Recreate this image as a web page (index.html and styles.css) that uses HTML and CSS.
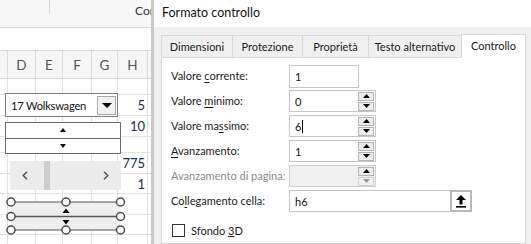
FILE: index.html
```html
<!DOCTYPE html>
<html lang="it">
<head>
<meta charset="utf-8">
<link rel="stylesheet" href="styles.css">
</head>
<body>
<div class="app">
  <div class="sheet">
    <div class="ribbon"><span class="rib-sep"></span><span class="rib-text">Con</span></div>
    <div class="fbar"></div>
    <div class="colheads">
      <div class="ch"></div><div class="ch">D</div><div class="ch">E</div><div class="ch">F</div><div class="ch">G</div><div class="ch">H</div><div class="ch last"></div>
    </div>
    <div class="cells">
      <div class="row r1"><div class="c"></div><div class="c"></div><div class="c"></div><div class="c"></div><div class="c"></div><div class="c v"></div><div class="c last"></div></div>
      <div class="row r2"><div class="c"></div><div class="c"></div><div class="c"></div><div class="c"></div><div class="c"></div><div class="c v">5</div><div class="c last"></div></div>
      <div class="row r3"><div class="c"></div><div class="c"></div><div class="c"></div><div class="c"></div><div class="c"></div><div class="c v">10</div><div class="c last"></div></div>
      <div class="row r4"><div class="c"></div><div class="c"></div><div class="c"></div><div class="c"></div><div class="c"></div><div class="c v"></div><div class="c last"></div></div>
      <div class="row r5"><div class="c"></div><div class="c"></div><div class="c"></div><div class="c"></div><div class="c"></div><div class="c v">775</div><div class="c last"></div></div>
      <div class="row r6"><div class="c"></div><div class="c"></div><div class="c"></div><div class="c"></div><div class="c"></div><div class="c v">1</div><div class="c last"></div></div>
      <div class="row r7"><div class="c"></div><div class="c"></div><div class="c"></div><div class="c"></div><div class="c"></div><div class="c v"></div><div class="c last"></div></div>
      <div class="row r8"><div class="c"></div><div class="c"></div><div class="c"></div><div class="c"></div><div class="c"></div><div class="c v"></div><div class="c last"></div></div>
      <div class="row r9"><div class="c"></div><div class="c"></div><div class="c"></div><div class="c"></div><div class="c"></div><div class="c v"></div><div class="c last"></div></div>
    </div>

    <div class="combo">
      <span class="combo-text">17 Wolkswagen</span>
      <span class="combo-btn"><svg width="10" height="5" viewBox="0 0 10 5"><path d="M0 0H10L5 5Z" fill="#000"/></svg></span>
    </div>

    <div class="spinctl">
      <div class="spin-half"><svg width="6" height="4" viewBox="0 0 6 4"><path d="M0 4H6L3 0Z" fill="#000"/></svg></div>
      <div class="spin-half"><svg width="6" height="4" viewBox="0 0 6 4"><path d="M0 0H6L3 4Z" fill="#000"/></svg></div>
    </div>

    <div class="scrollctl">
      <span class="sc-arrow"><svg width="6" height="9" viewBox="0 0 6 9"><path d="M5 0.8L1.2 4.5L5 8.2" fill="none" stroke="#505050" stroke-width="1.4"/></svg></span>
      <span class="sc-thumb"></span>
      <span class="sc-space"></span>
      <span class="sc-arrow"><svg width="6" height="9" viewBox="0 0 6 9"><path d="M1 0.8L4.8 4.5L1 8.2" fill="none" stroke="#505050" stroke-width="1.4"/></svg></span>
    </div>

    <svg class="selctl" width="122" height="38" viewBox="0 0 122 38">
      <rect x="6" y="5" width="109" height="28" fill="#eeeeee"/>
      <line x1="6" y1="5" x2="115" y2="5" stroke="#555" stroke-width="1"/>
      <line x1="6" y1="19.5" x2="115" y2="19.5" stroke="#555" stroke-width="1.6"/>
      <line x1="6" y1="33" x2="115" y2="33" stroke="#555" stroke-width="1"/>
      <path d="M57.5 16H64.5L61 11.5Z" fill="#000"/>
      <path d="M57.5 23H64.5L61 27.5Z" fill="#000"/>
      <g fill="#fff" stroke="#4a4a4a" stroke-width="1.5">
        <circle cx="6" cy="5" r="4"/><circle cx="61" cy="5" r="4"/><circle cx="115.5" cy="5" r="4"/>
        <circle cx="6" cy="19.5" r="4"/><circle cx="115.5" cy="19.5" r="4"/>
        <circle cx="6" cy="33" r="4"/><circle cx="61" cy="33" r="4"/><circle cx="115.5" cy="33" r="4"/>
      </g>
    </svg>
  </div>

  <div class="dialog">
    <div class="titlebar">Formato controllo</div>
    <div class="body">
      <div class="tabs">
        <div class="tab t1">Dimensioni</div>
        <div class="tab t2">Protezione</div>
        <div class="tab t3">Proprietà</div>
        <div class="tab t4">Testo alternativo</div>
        <div class="tab active">Controllo</div>
      </div>
      <div class="panel">
        <div class="form">
          <label class="lbl">Valore <u>c</u>orrente:</label>
          <div class="field plain"><span class="val">1</span></div>

          <label class="lbl">Valore <u>m</u>inimo:</label>
          <div class="field spinf"><span class="val">0</span>
            <span class="spin"><b><svg width="7" height="4" viewBox="0 0 7 4"><path d="M0 4H7L3.5 0Z" fill="#000"/></svg></b><b><svg width="7" height="4" viewBox="0 0 7 4"><path d="M0 0H7L3.5 4Z" fill="#000"/></svg></b></span>
          </div>

          <label class="lbl">Valore ma<u>s</u>simo:</label>
          <div class="field spinf"><span class="val">6<i class="caret"></i></span>
            <span class="spin"><b><svg width="7" height="4" viewBox="0 0 7 4"><path d="M0 4H7L3.5 0Z" fill="#000"/></svg></b><b><svg width="7" height="4" viewBox="0 0 7 4"><path d="M0 0H7L3.5 4Z" fill="#000"/></svg></b></span>
          </div>

          <label class="lbl"><u>A</u>vanzamento:</label>
          <div class="field spinf"><span class="val">1</span>
            <span class="spin"><b><svg width="7" height="4" viewBox="0 0 7 4"><path d="M0 4H7L3.5 0Z" fill="#000"/></svg></b><b><svg width="7" height="4" viewBox="0 0 7 4"><path d="M0 0H7L3.5 4Z" fill="#000"/></svg></b></span>
          </div>

          <label class="lbl dis">Avanzamento di pagina:</label>
          <div class="field spinf disabled"><span class="val"></span>
            <span class="spin"><b><svg width="7" height="4" viewBox="0 0 7 4"><path d="M0 4H7L3.5 0Z" fill="#000"/></svg></b><b class="off"><svg width="7" height="4" viewBox="0 0 7 4"><path d="M0 0H7L3.5 4Z" fill="#9a9a9a"/></svg></b></span>
          </div>

          <label class="lbl">Co<u>l</u>legamento cella:</label>
          <div class="field link"><span class="val">h6</span>
            <span class="refbtn"><svg width="10" height="13" viewBox="0 0 10 13"><path d="M5 0L10 5H6.5V9.5H3.5V5H0Z" fill="#000"/><rect x="0" y="11" width="10" height="1.6" fill="#000"/></svg></span>
          </div>
        </div>
        <div class="check"><span class="box"></span><span>Sfondo <u>3</u>D</span></div>
      </div>
    </div>
  </div>
</div>
</body>
</html>
```

FILE: styles.css
```css
* { box-sizing: border-box; }
html, body { margin: 0; padding: 0; }
body {
  width: 531px;
  height: 244px;
  overflow: hidden;
  background: #ffffff;
  font-family: Lato, "Noto Sans", sans-serif;
  color: #1a1a1a;
}
.app {
  display: flex;
  width: 531px;
  height: 244px;
}

/* ---------- spreadsheet ---------- */
.sheet {
  position: relative;
  width: 151px;
  flex: none;
  background: #fff;
  overflow: hidden;
}
.ribbon {
  height: 28px;
  background: #f7f7f7;
  border-bottom: 1px solid #d6d6d6;
  display: flex;
  align-items: flex-start;
  overflow: hidden;
  white-space: nowrap;
}
.rib-sep {
  flex: none;
  margin-left: 49px;
  width: 1px;
  height: 13px;
  background: #d4d4d4;
}
.rib-text {
  margin-left: 85px;
  margin-top: 3px;
  font-size: 12px;
  color: #333;
}
.fbar {
  height: 23px;
  background: #fff;
  border-bottom: 1px solid #d6d6d6;
}
.colheads, .row {
  display: grid;
  grid-template-columns: 8px 28px 27px 29px 26px 30px 3px;
}
.colheads {
  height: 28px;
  background: #f6f6f6;
  border-bottom: 1px solid #d4d4d4;
}
.ch {
  border-right: 1px solid #dcdcdc;
  font-size: 13.5px;
  color: #555;
  display: flex;
  align-items: center;
  justify-content: center;
  padding-top: 1px;
}
.ch.last, .c.last { border-right: none; }
.c {
  border-right: 1px solid #e2e2e2;
  border-bottom: 1px solid #e2e2e2;
}
.r1 { height: 16px; }
.r2 { height: 21px; }
.r3 { height: 21px; }
.r4 { height: 16px; }
.r5 { height: 21px; }
.r6 { height: 20px; }
.r7 { height: 21px; }
.r8 { height: 20px; }
.r9 { height: 21px; }
.v {
  font-size: 13px;
  color: #1e2d4d;
  text-align: right;
  padding-right: 2px;
  display: flex;
  align-items: center;
  justify-content: flex-end;
}

/* controls lying over the grid */
.combo {
  position: absolute;
  left: 5px;
  top: 93px;
  width: 113px;
  height: 24px;
  background: #fff;
  border: 1px solid #7d7d7d;
  display: flex;
  align-items: center;
  padding: 0 1px 0 5px;
}
.combo-text {
  flex: 1;
  font-size: 11.2px;
  letter-spacing: -0.25px;
  color: #111;
  white-space: nowrap;
}
.combo-btn {
  flex: none;
  width: 19px;
  height: 19px;
  border: 1px solid #a7a7a7;
  background: #f2f2f2;
  display: flex;
  align-items: center;
  justify-content: center;
}
.spinctl {
  position: absolute;
  left: 5px;
  top: 122px;
  width: 116px;
  height: 32px;
  border: 1px solid #6c6c6c;
  background: #fff;
  display: flex;
  flex-direction: column;
}
.spin-half {
  flex: 1;
  display: flex;
  align-items: center;
  justify-content: center;
}
.spin-half + .spin-half { border-top: 1px solid #6c6c6c; }
.scrollctl {
  position: absolute;
  left: 10px;
  top: 161px;
  width: 111px;
  height: 29px;
  background: #ececec;
  display: flex;
  align-items: center;
}
.sc-arrow {
  width: 30px;
  display: flex;
  justify-content: center;
}
.sc-thumb {
  align-self: stretch;
  width: 6px;
  margin-left: 4px;
  background: #cdcdcd;
}
.sc-space { flex: 1; }
.selctl {
  position: absolute;
  left: 5px;
  top: 197px;
}

/* ---------- dialog ---------- */
.dialog {
  flex: 1;
  display: flex;
  flex-direction: column;
  border-left: 3px solid #c9c9c9;
  background: #f0f0f0;
}
.titlebar {
  height: 27px;
  background: #fff;
  font-size: 12.5px;
  padding: 5px 0 0 8px;
  color: #111;
}
.body {
  flex: 1;
  padding: 6px 0 0 7px;
  display: flex;
  flex-direction: column;
}
.tabs {
  display: flex;
  align-items: flex-end;
  height: 24px;
}
.tab {
  height: 22px;
  border: 1px solid #d9d9d9;
  border-bottom: none;
  border-right: none;
  font-size: 11px;
  display: flex;
  align-items: center;
  justify-content: center;
  color: #1a1a1a;
  background: #f0f0f0;
}
.t1 { width: 71px; }
.t2 { width: 70px; }
.t3 { width: 66px; }
.t4 { width: 93px; }
.tab.active {
  width: 65px;
  height: 24px;
  background: #fff;
  border-right: 1px solid #d9d9d9;
  padding-bottom: 3px;
  margin-bottom: -1px;
  position: relative;
  z-index: 1;
}
.panel {
  width: 365px;
  flex: 1;
  background: #fff;
  border: 1px solid #d9d9d9;
  padding: 7px 0 0 9px;
}
.form {
  display: grid;
  grid-template-columns: 118px auto;
  grid-auto-rows: 22px;
  row-gap: 3px;
  justify-items: start;
  align-items: center;
}
.lbl {
  font-size: 11px;
  line-height: 13px;
  color: #1a1a1a;
  margin-top: -2px;
}
.lbl u { text-decoration-thickness: 1px; text-underline-offset: 2px; }
.lbl.dis { color: #8a8a8a; }
.field {
  height: 22px;
  border: 1px solid #c5c5c5;
  background: #fff;
  display: flex;
  align-items: center;
  align-self: start;
}
.field.plain { width: 70px; height: 23px; }
.field.spinf { width: 87px; }
.field.link { width: 183px; }
.field.disabled { background: #f0f0f0; border-color: #cfcfcf; }
.val {
  flex: 1;
  padding-left: 5px;
  font-size: 11px;
  color: #111;
  display: flex;
  align-items: center;
}
.caret {
  display: inline-block;
  width: 1px;
  height: 13px;
  background: #000;
  margin-left: 1px;
}
.spin {
  display: flex;
  flex-direction: column;
  gap: 1px;
  margin-right: 1px;
}
.spin b {
  width: 16px;
  height: 9px;
  border: 1px solid #b4b4b4;
  background: #ededed;
  display: flex;
  align-items: center;
  justify-content: center;
}
.spin b.off { background: #f3f3f3; border-color: #d2d2d2; }
.refbtn {
  width: 22px;
  height: 22px;
  margin: -1px -1px -1px 0;
  border: 2px solid #b9b9b9;
  background: #fff;
  display: flex;
  align-items: center;
  justify-content: center;
}
.check {
  display: flex;
  align-items: center;
  gap: 6px;
  margin: 12px 0 0 1px;
  font-size: 11px;
}
.box {
  width: 13px;
  height: 13px;
  border: 1px solid #333;
  background: #fff;
}
```
